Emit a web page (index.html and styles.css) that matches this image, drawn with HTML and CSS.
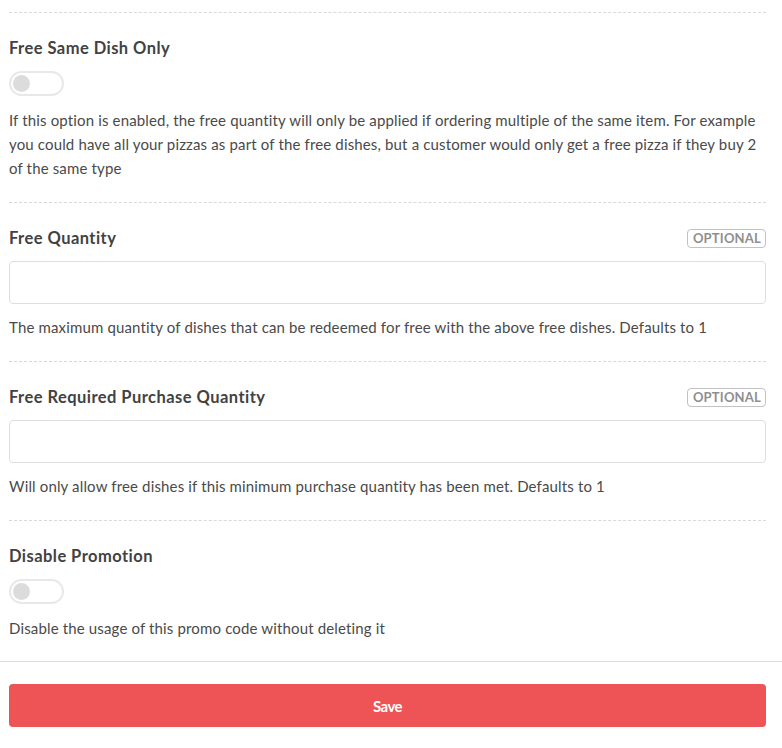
FILE: index.html
```html
<!DOCTYPE html>
<html>
<head>
<meta charset="utf-8">
<link rel="stylesheet" href="styles.css">
</head>
<body>
<div class="form">
  <div class="divider-top"></div>
  <div class="section">
    <div class="label-row"><span class="label">Free Same Dish Only</span></div>
    <div class="toggle"><span class="knob"></span></div>
    <p class="help">If this option is enabled, the free quantity will only be applied if ordering multiple of the same item. For example you could have all your pizzas as part of the free dishes, but a customer would only get a free pizza if they buy 2 of the same type</p>
  </div>
  <div class="section">
    <div class="label-row"><span class="label">Free Quantity</span><span class="badge">OPTIONAL</span></div>
    <input class="input" type="text">
    <p class="help">The maximum quantity of dishes that can be redeemed for free with the above free dishes. Defaults to 1</p>
  </div>
  <div class="section">
    <div class="label-row"><span class="label">Free Required Purchase Quantity</span><span class="badge">OPTIONAL</span></div>
    <input class="input" type="text">
    <p class="help">Will only allow free dishes if this minimum purchase quantity has been met. Defaults to 1</p>
  </div>
  <div class="section last">
    <div class="label-row"><span class="label">Disable Promotion</span></div>
    <div class="toggle"><span class="knob"></span></div>
    <p class="help">Disable the usage of this promo code without deleting it</p>
  </div>
</div>
<div class="footer">
  <button class="save">Save</button>
</div>
</body>
</html>
```

FILE: styles.css
```css
* { box-sizing: border-box; }
html, body { margin: 0; padding: 0; background: #fff; }
body {
  font-family: Lato, "Open Sans", sans-serif;
  color: #3f3f3f;
}
.form {
  padding: 12px 16px 0 9px;
}
.divider-top {
  border-top: 1px dashed #d9d9d9;
}
.section {
  padding: 25px 0 22px;
  border-bottom: 1px dashed #d9d9d9;
}
.section.last {
  border-bottom: none;
  padding-bottom: 21px;
}
.label-row {
  display: flex;
  justify-content: space-between;
  align-items: center;
  height: 20px;
  margin-bottom: 13px;
}
.label {
  font-size: 16.5px;
  font-weight: 700;
  color: #424242;
  letter-spacing: 0.45px;
}
.badge {
  font-size: 13px;
  font-weight: 700;
  color: #8f8f8f;
  border: 1px solid #c2c2c2;
  border-radius: 4px;
  padding: 1px 4px 1px 5px;
  line-height: 15px;
  letter-spacing: 0.2px;
}
.toggle {
  width: 55px;
  height: 25px;
  border: 2px solid #e8e8e8;
  border-radius: 13px;
  display: flex;
  align-items: center;
  padding-left: 2px;
  margin-bottom: 12px;
}
.knob {
  width: 17px;
  height: 17px;
  border-radius: 50%;
  background: #dcdcdc;
}
.input {
  display: block;
  width: 100%;
  height: 43px;
  border: 1px solid #dedede;
  border-radius: 4px;
  margin: 0 0 11px;
  background: #fff;
}
.help {
  margin: 0;
  font-size: 15px;
  line-height: 24px;
  letter-spacing: 0.15px;
  color: #4a4a4a;
}
.footer {
  border-top: 1px solid #dcdcdc;
  padding: 22px 16px 0 9px;
}
.save {
  display: block;
  width: 100%;
  height: 43px;
  background: #ee5455;
  border: none;
  border-radius: 4px;
  color: #fff;
  font-family: Lato, sans-serif;
  font-weight: 700;
  font-size: 15px;
  letter-spacing: -0.6px;
}
```
